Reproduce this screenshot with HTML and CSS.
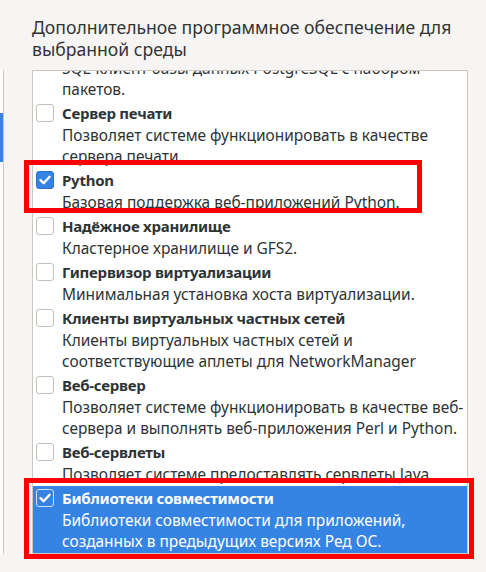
FILE: index.html
```html
<!DOCTYPE html>
<html lang="ru">
<head>
<meta charset="utf-8">
<link rel="stylesheet" href="styles.css">
</head>
<body>
<div class="page">
  <h1 class="heading">Дополнительное программное обеспечение для<br>выбранной среды</h1>
  <div class="panes">
    <div class="left-pane"><div class="left-sel"></div></div>
    <div class="list">
      <div class="list-inner">
        <div class="row">
          <span class="cb"></span>
          <div class="txt">
            <div class="title">Клиент базы данных PostgreSQL</div>
            <div class="desc">SQL-клиент базы данных PostgreSQL с набором<br>пакетов.</div>
          </div>
        </div>
        <div class="row">
          <span class="cb"></span>
          <div class="txt">
            <div class="title">Сервер печати</div>
            <div class="desc">Позволяет системе функционировать в качестве<br>сервера печати.</div>
          </div>
        </div>
        <div class="row">
          <span class="cb checked"><svg viewBox="0 0 18 18" width="18" height="18"><path d="M4.5 9.2 L7.6 12.2 L13.6 5.8" fill="none" stroke="#fff" stroke-width="2.4" stroke-linecap="round" stroke-linejoin="round"/></svg></span>
          <div class="txt">
            <div class="title">Python</div>
            <div class="desc">Базовая поддержка веб-приложений Python.</div>
          </div>
        </div>
        <div class="row">
          <span class="cb"></span>
          <div class="txt">
            <div class="title">Надёжное хранилище</div>
            <div class="desc">Кластерное хранилище и GFS2.</div>
          </div>
        </div>
        <div class="row">
          <span class="cb"></span>
          <div class="txt">
            <div class="title">Гипервизор виртуализации</div>
            <div class="desc">Минимальная установка хоста виртуализации.</div>
          </div>
        </div>
        <div class="row">
          <span class="cb"></span>
          <div class="txt">
            <div class="title">Клиенты виртуальных частных сетей</div>
            <div class="desc">Клиенты виртуальных частных сетей и<br>соответствующие аплеты для NetworkManager</div>
          </div>
        </div>
        <div class="row">
          <span class="cb"></span>
          <div class="txt">
            <div class="title">Веб-сервер</div>
            <div class="desc">Позволяет системе функционировать в качестве веб-<br>сервера и выполнять веб-приложения Perl и Python.</div>
          </div>
        </div>
        <div class="row">
          <span class="cb"></span>
          <div class="txt">
            <div class="title">Веб-сервлеты</div>
            <div class="desc">Позволяет системе предоставлять сервлеты Java.</div>
          </div>
        </div>
        <div class="row selected">
          <span class="cb checked sel"><svg viewBox="0 0 18 18" width="18" height="18"><path d="M4.5 9.2 L7.6 12.2 L13.6 5.8" fill="none" stroke="#fff" stroke-width="2.4" stroke-linecap="round" stroke-linejoin="round"/></svg></span>
          <div class="txt">
            <div class="title">Библиотеки совместимости</div>
            <div class="desc">Библиотеки совместимости для приложений,<br>созданных в предыдущих версиях Ред ОС.</div>
          </div>
        </div>
      </div>
    </div>
  </div>
  <div class="mark mark-python"></div>
  <div class="mark mark-compat"></div>
</div>
</body>
</html>
```
FILE: styles.css
```css
* { box-sizing: border-box; }
html, body { margin: 0; padding: 0; }
body {
  background: #f6f5f4;
  font-family: "Noto Sans", "Open Sans", sans-serif;
  color: #2e3436;
  width: 486px;
  height: 572px;
  overflow: hidden;
}
.page { position: relative; height: 572px; }
.heading {
  margin: 0;
  padding: 16px 0 0 32px;
  font-size: 17.6px;
  line-height: 22px;
  font-weight: normal;
  color: #333;
  white-space: nowrap;
}
.panes {
  display: flex;
  gap: 28px;
  margin-top: 10px;
  height: 484px;
}
.left-pane {
  width: 4px;
  background: #fff;
  border-right: 1px solid #cdc7c2;
}
.left-sel {
  margin-top: 43px;
  height: 49px;
  width: 3px;
  background: #3584e4;
}
.list {
  width: 436px;
  background: #fff;
  border: 1px solid #cdc7c2;
  overflow: hidden;
}
.list-inner { margin-top: -37px; }
.row {
  display: flex;
  align-items: flex-start;
  gap: 8px;
  padding: 0 4px 1px 3px;
  white-space: nowrap;
}
.cb {
  flex: none;
  width: 18px;
  height: 18px;
  margin-top: 3px;
  border: 1px solid #c4c0bb;
  border-radius: 3px;
  background: #fff;
  display: flex;
}
.cb.checked {
  background: #3584e4;
  border-color: #2a73cc;
}
.cb svg { display: block; margin: -1px; }
.cb.sel { border-color: #cfe1f7; background: #3584e4; }
.title {
  font-weight: bold;
  font-size: 15px;
  letter-spacing: -0.25px;
  line-height: 24px;
}
.desc {
  font-size: 15.45px;
  line-height: 21px;
}
.row.selected {
  background: #3584e4;
  color: #fff;
}
.mark {
  position: absolute;
  border: 5px solid #f00;
}
.mark-python { left: 24px; top: 160px; width: 398px; height: 53px; }
.mark-compat { left: 24px; top: 478px; width: 450px; height: 81px; }
```
